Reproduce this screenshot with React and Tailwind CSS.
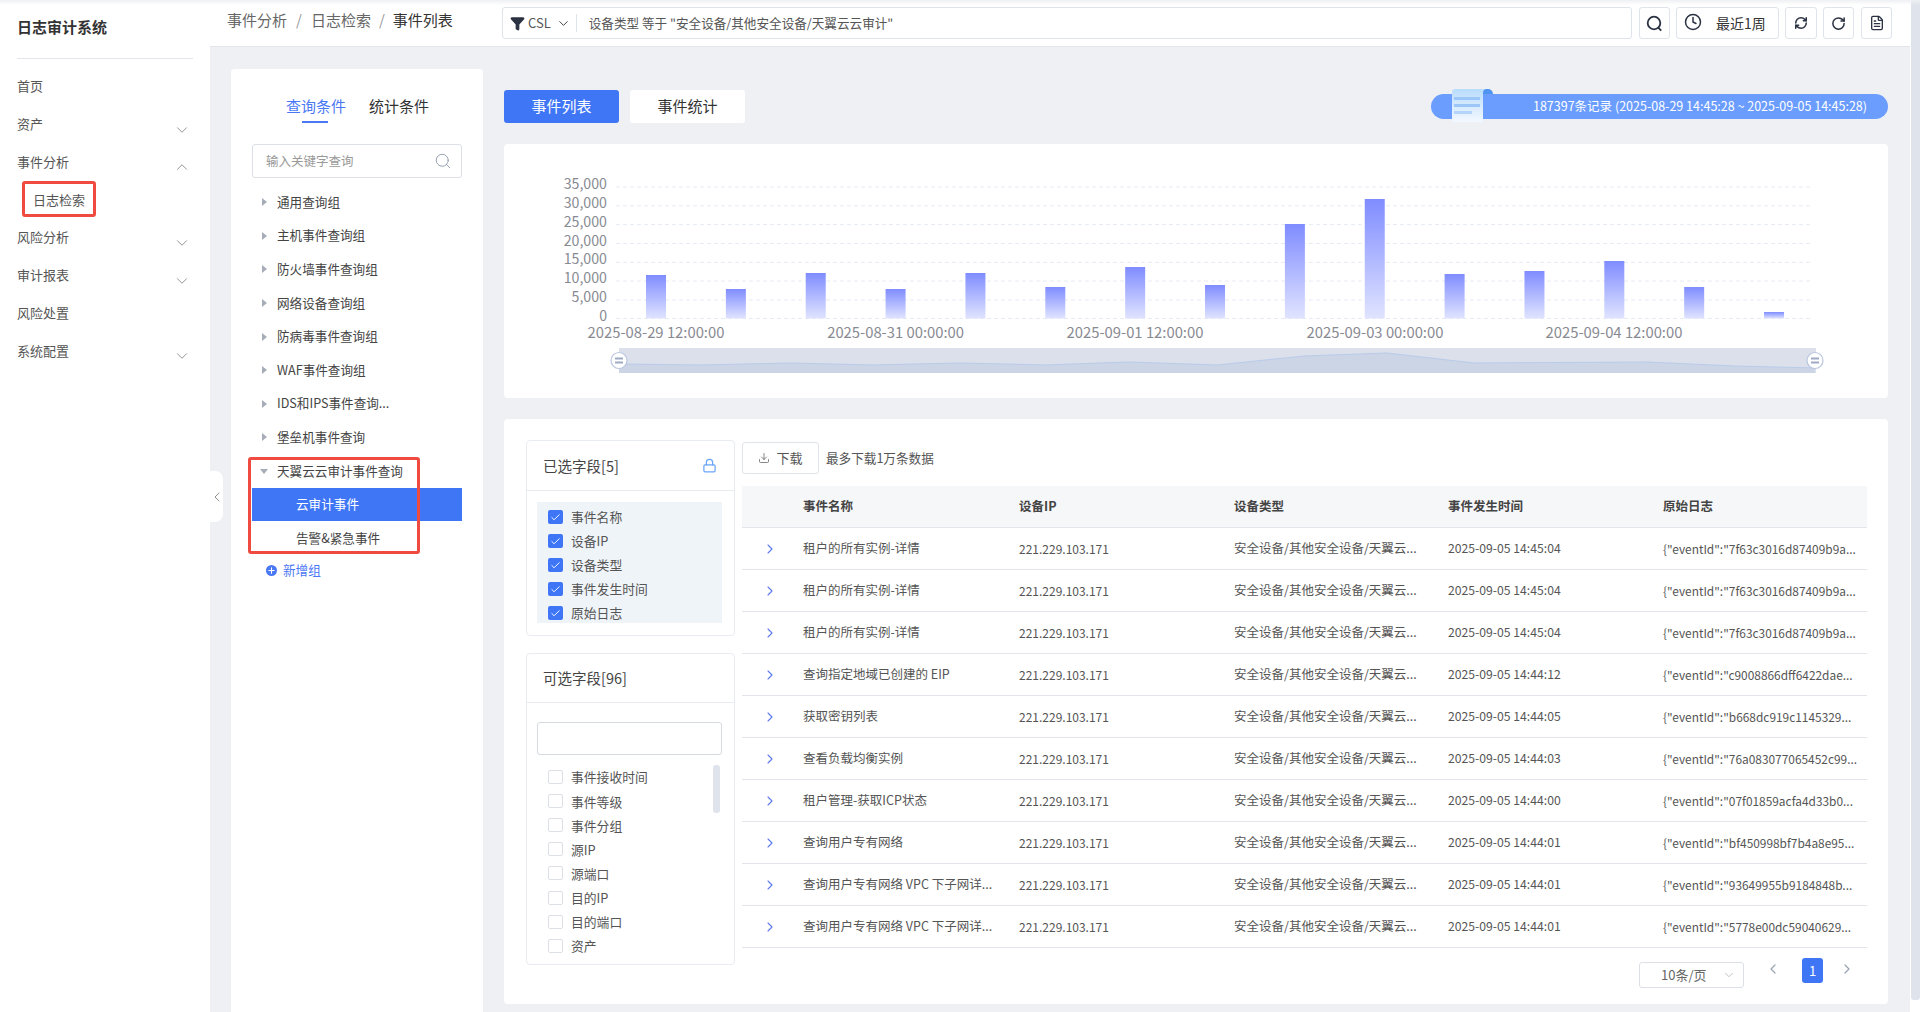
import { ChevronDown, ChevronUp, ChevronLeft, ChevronRight, Check, Clock, RotateCw, FileText, RefreshCw, Lock, Search, Download, Filter, Plus } from "lucide-react";

const menu = [
  { label: "首页" },
  { label: "资产", arrow: "down" },
  { label: "事件分析", arrow: "up" },
  { label: "日志检索", sub: true },
  { label: "风险分析", arrow: "down" },
  { label: "审计报表", arrow: "down" },
  { label: "风险处置" },
  { label: "系统配置", arrow: "down" },
];

const groups = ["通用查询组", "主机事件查询组", "防火墙事件查询组", "网络设备查询组", "防病毒事件查询组", "WAF事件查询组", "IDS和IPS事件查询...", "堡垒机事件查询"];

const selectedFields = ["事件名称", "设备IP", "设备类型", "事件发生时间", "原始日志"];
const optionalFields = ["事件接收时间", "事件等级", "事件分组", "源IP", "源端口", "目的IP", "目的端口", "资产"];

const rows = [
  ["租户的所有实例-详情", "2025-09-05 14:45:04", '{"eventId":"7f63c3016d87409b9a...'],
  ["租户的所有实例-详情", "2025-09-05 14:45:04", '{"eventId":"7f63c3016d87409b9a...'],
  ["租户的所有实例-详情", "2025-09-05 14:45:04", '{"eventId":"7f63c3016d87409b9a...'],
  ["查询指定地域已创建的 EIP", "2025-09-05 14:44:12", '{"eventId":"c9008866dff6422dae...'],
  ["获取密钥列表", "2025-09-05 14:44:05", '{"eventId":"b668dc919c1145329...'],
  ["查看负载均衡实例", "2025-09-05 14:44:03", '{"eventId":"76a083077065452c99...'],
  ["租户管理-获取ICP状态", "2025-09-05 14:44:00", '{"eventId":"07f01859acfa4d33b0...'],
  ["查询用户专有网络", "2025-09-05 14:44:01", '{"eventId":"bf450998bf7b4a8e95...'],
  ["查询用户专有网络 VPC 下子网详...", "2025-09-05 14:44:01", '{"eventId":"93649955b9184848b...'],
  ["查询用户专有网络 VPC 下子网详...", "2025-09-05 14:44:01", '{"eventId":"5778e00dc59040629...'],
];

const barTops = [275, 289, 273, 289, 273, 287, 267, 285, 224, 199, 274, 271, 261, 287, 312];
const gridY = [187, 205.8, 224.6, 243.5, 262.3, 281, 300, 318.5];
const yLabels = ["35,000", "30,000", "25,000", "20,000", "15,000", "10,000", "5,000", "0"];
const xLabels = [
  [656, "2025-08-29 12:00:00"],
  [895.6, "2025-08-31 00:00:00"],
  [1135, "2025-09-01 12:00:00"],
  [1375, "2025-09-03 00:00:00"],
  [1614, "2025-09-04 12:00:00"],
];
const sliderLine = "M619 364 L700 365 L790 363 L873 365 L960 363 L1046 365 L1129 362 L1217 365 L1304 356 L1387 353 L1474 363 L1646 362 L1735 366 L1815 368";

function Chart() {
  return (
    <svg viewBox="504 144 1384 254" className="block w-full h-full">
      <defs>
        <linearGradient id="bar" x1="0" y1="0" x2="0" y2="1">
          <stop offset="0%" stopColor="#7f8cff" />
          <stop offset="100%" stopColor="#e0e4ff" />
        </linearGradient>
      </defs>
      {gridY.map((y, i) => (
        <g key={y}>
          <line x1="616" x2="1813" y1={y} y2={y} stroke="#e6eaf3" strokeWidth="1" strokeDasharray="4 3" />
          <text x="607" y={y + 2} textAnchor="end" fontSize="14.2" fill="#888a92">{yLabels[i]}</text>
        </g>
      ))}
      {barTops.map((top, i) => (
        <rect key={i} x={646 + i * 79.86} y={top} width="20" height={318.5 - top} fill="url(#bar)" />
      ))}
      {xLabels.map(([x, label]) => (
        <text key={label} x={x} y="337.5" textAnchor="middle" fontSize="14.8" fill="#888a92">{label}</text>
      ))}
      <rect x="619" y="348" width="1197" height="25" fill="#dbe0ea" />
      <path d={sliderLine + " L1815 373 L619 373 Z"} fill="#ccd5e6" />
      <path d={sliderLine} fill="none" stroke="#b9cbea" strokeWidth="1" />
      {[619, 1815].map((x) => (
        <g key={x}>
          <circle cx={x} cy="360.5" r="8" fill="#fff" stroke="#b9c6df" strokeWidth="1.2" />
          <rect x={x - 4} y="357.5" width="8" height="2" fill="#9daac6" />
          <rect x={x - 4} y="361.5" width="8" height="2" fill="#9daac6" />
        </g>
      ))}
    </svg>
  );
}

function Triangle({ open }) {
  return (
    <svg width="10" height="10" viewBox="0 0 10 10" className="flex-none">
      {open ? <polygon points="1,3 9,3 5,8" fill="#a7adb8" /> : <polygon points="3,1 8,5 3,9" fill="#a7adb8" />}
    </svg>
  );
}

function Sidebar() {
  return (
    <aside className="w-[210px] flex-none bg-white">
      <div className="h-[59px] mx-[17px] border-b border-[#e3e5ea] pt-[16px] text-[15px] leading-[22px] font-bold text-[#333]">
        日志审计系统
      </div>
      <div className="pt-[8px] text-[13px] text-[#555]">
        {menu.map((item) =>
          item.sub ? (
            <div key={item.label} className="h-[37.8px] flex items-center pl-[22px]">
              <div className="w-[74px] h-[36px] border-[3px] border-[#f04b40] rounded-[3px] flex items-center justify-center">
                {item.label}
              </div>
            </div>
          ) : (
            <div key={item.label} className="h-[37.8px] flex items-center pl-[17px] pr-[19px] justify-between">
              <span>{item.label}</span>
              {item.arrow === "down" && <ChevronDown size={18} strokeWidth={1.2} className="text-[#888] mt-[12px]" />}
              {item.arrow === "up" && <ChevronUp size={18} strokeWidth={1.2} className="text-[#888] mt-[11px]" />}
            </div>
          )
        )}
      </div>
    </aside>
  );
}

function IconButton({ children, className }) {
  return (
    <div className={"h-[32px] flex-none flex items-center justify-center border border-[#dfe3eb] rounded-[3px] bg-white text-[#2b3242] " + className}>
      {children}
    </div>
  );
}

function TopBar() {
  return (
    <header className="h-[47px] flex-none flex items-center bg-white border-b border-[#e3e5ea] pl-[17px] pr-[18px]">
      <div className="w-[275px] flex-none -mt-[5px] text-[15px] text-[#666] flex items-center">
        <span>事件分析</span>
        <span className="mx-[9px] text-[#999]">/</span>
        <span>日志检索</span>
        <span className="mx-[8px] text-[#999]">/</span>
        <span className="text-[#333]">事件列表</span>
      </div>
      <div className="flex-1 h-[32px] flex items-center border border-[#dfe3eb] rounded-[3px] pl-[7px]">
        <Filter size={15} fill="#2b3242" className="text-[#2b3242] flex-none" />
        <span className="ml-[3px] text-[13px] text-[#555]">CSL</span>
        <ChevronDown size={15} strokeWidth={1.6} className="ml-[5px] text-[#444]" />
        <div className="w-px h-[18px] bg-[#dfe3eb] ml-[5px]"></div>
        <span className="ml-[12px] text-[12.6px] text-[#555] whitespace-pre">设备类型 等于 "安全设备/其他安全设备/天翼云云审计"</span>
      </div>
      <IconButton className="w-[31px] ml-[7px]">
        <svg width="17" height="17" viewBox="0 0 17 17" fill="none" stroke="currentColor" strokeWidth="1.8">
          <circle cx="8" cy="8" r="6.3" />
          <path d="M12.3 12.6 L15.2 15.6" />
        </svg>
      </IconButton>
      <IconButton className="w-[103px] ml-[6px] !justify-start pl-[7px]">
        <Clock size={18} strokeWidth={2} className="-mt-[2px]" />
        <span className="ml-[14px] text-[14px] text-[#333]">最近1周</span>
      </IconButton>
      <IconButton className="w-[32px] ml-[6px]"><RefreshCw size={14} strokeWidth={2.6} /></IconButton>
      <IconButton className="w-[31px] ml-[6px]"><RotateCw size={15} strokeWidth={2.4} /></IconButton>
      <IconButton className="w-[31px] ml-[7px]"><FileText size={16} strokeWidth={2} /></IconButton>
    </header>
  );
}

function QueryPanel() {
  return (
    <div className="w-[252px] flex-none bg-white rounded-t-[4px] self-stretch">
      <div className="h-[54px] pt-[26px] pl-[55px] flex text-[15px] leading-[22px]">
        <div className="relative text-[#4a78f5] w-[60px] whitespace-nowrap">
          查询条件
          <div className="absolute left-[16px] top-[26px] w-[26px] h-[2px] bg-[#4a78f5]"></div>
        </div>
        <div className="ml-[23px] text-[#333] whitespace-nowrap">统计条件</div>
      </div>
      <div className="mx-[21px] mt-[21px] h-[34px] border border-[#dcdfe6] rounded-[3px] flex items-center justify-between pl-[13px] pr-[9px]">
        <span className="text-[12.5px] text-[#999]">输入关键字查询</span>
        <Search size={18} strokeWidth={1.2} className="text-[#8c96a8]" />
      </div>
      <div className="mt-[7.5px] ml-[21px] text-[12.6px] text-[#444]">
        {groups.map((g) => (
          <div key={g} className="h-[33.6px] flex items-center pl-[7px] gap-[8px]">
            <Triangle />
            <span>{g}</span>
          </div>
        ))}
        <div className="relative w-[210px]">
          <div className="absolute -left-[4px] top-[3px] w-[172px] h-[97px] border-[3px] border-[#f04b40] rounded-[3px]"></div>
          <div className="h-[33.6px] flex items-center pl-[7px] gap-[8px]">
            <Triangle open />
            <span>天翼云云审计事件查询</span>
          </div>
          <div className="h-[33.6px] flex items-center pl-[44px] bg-[#3f76f6] text-white">云审计事件</div>
          <div className="h-[33.6px] flex items-center pl-[44px]">告警&amp;紧急事件</div>
        </div>
        <div className="h-[30px] flex items-center pl-[14px] gap-[6px] text-[#4a78f5]">
          <span className="w-[11px] h-[11px] rounded-full bg-[#4a78f5] flex items-center justify-center">
            <Plus size={9} strokeWidth={3} className="text-white" />
          </span>
          新增组
        </div>
      </div>
    </div>
  );
}

function Box({ checked }) {
  return checked ? (
    <span className="w-[15px] h-[14px] flex-none rounded-[2px] bg-[#3f76f6] flex items-center justify-center">
      <Check size={11} strokeWidth={2} className="text-white" />
    </span>
  ) : (
    <span className="w-[15px] h-[14px] flex-none rounded-[2px] border border-[#dcdfe6] bg-white"></span>
  );
}

function FieldPanel() {
  return (
    <div className="w-[209px] flex-none text-[12.8px] text-[#555]">
      <div className="h-[196px] border border-[#e8ebf0] rounded-[4px]">
        <div className="h-[50px] border-b border-[#e8ebf0] pl-[16px] pr-[17px] flex items-center justify-between text-[14.5px] text-[#444]">
          已选字段[5]
          <Lock size={15} strokeWidth={2} className="text-[#69a5f7]" />
        </div>
        <div className="ml-[10px] mr-[12px] mt-[11px] h-[121px] bg-[#eff4f9] pl-[11px] pt-[3px] overflow-hidden">
          {selectedFields.map((f) => (
            <div key={f} className="h-[24px] flex items-center gap-[8px]">
              <Box checked />
              {f}
            </div>
          ))}
        </div>
      </div>
      <div className="mt-[17px] h-[312px] border border-[#e8ebf0] rounded-[4px]">
        <div className="h-[49px] border-b border-[#e8ebf0] pl-[16px] flex items-center text-[14.5px] text-[#444]">可选字段[96]</div>
        <div className="ml-[10px] mr-[12px] mt-[19px] h-[33px] border border-[#d5d9e0] rounded-[3px]"></div>
        <div className="relative ml-[10px] mr-[12px] mt-[10px] h-[196px] pl-[11px] overflow-hidden">
          <div className="absolute right-[2px] top-0 w-[7px] h-[48px] rounded-[3px] bg-[#dfe3ec]"></div>
          {optionalFields.map((f) => (
            <div key={f} className="h-[24.1px] flex items-center gap-[8px]">
              <Box />
              {f}
            </div>
          ))}
        </div>
      </div>
    </div>
  );
}

function EventTable() {
  return (
    <div className="flex-1 min-w-0 pt-[2px] text-[12.5px] text-[#555]">
      <div className="flex items-center h-[32px]">
        <div className="w-[77px] h-[32px] flex items-center justify-center gap-[6px] border border-[#dfe3eb] rounded-[3px] text-[#555] text-[13px]">
          <Download size={12} strokeWidth={1.4} />
          下载
        </div>
        <span className="ml-[7px] text-[12.6px]">最多下载1万条数据</span>
      </div>
      <div className="mt-[12px] h-[42px] grid grid-cols-[61px_216px_215px_214px_215px_1fr] items-center bg-[#f6f7f9] border-b border-[#e3e5ea] font-bold text-[#444]">
        <span></span>
        <span>事件名称</span>
        <span>设备IP</span>
        <span>设备类型</span>
        <span>事件发生时间</span>
        <span>原始日志</span>
      </div>
      {rows.map((r, i) => (
        <div key={i} className="h-[42px] grid grid-cols-[61px_216px_215px_214px_215px_1fr] items-center border-b border-[#e3e5ea]">
          <ChevronRight size={16} strokeWidth={1.6} className="text-[#5a7bea] ml-[20px]" />
          <span className="whitespace-nowrap">{r[0]}</span>
          <span className="text-[12px]">221.229.103.171</span>
          <span className="whitespace-nowrap">安全设备/其他安全设备/天翼云...</span>
          <span className="text-[12.2px]">{r[1]}</span>
          <span className="whitespace-nowrap text-[11.9px]">{r[2]}</span>
        </div>
      ))}
      <div className="flex items-start mt-[10px] pl-[897px]">
        <div className="w-[105px] h-[26px] mt-[4px] flex items-center justify-between border border-[#dcdfe6] rounded-[3px] pl-[21px] pr-[7px] text-[13px] text-[#666]">
          10条/页
          <ChevronDown size={14} strokeWidth={1.2} className="text-[#aaa]" />
        </div>
        <ChevronLeft size={16} strokeWidth={1.8} className="ml-[21px] mt-[3px] text-[#9aa3b2]" />
        <div className="ml-[21px] w-[21px] h-[25px] rounded-[3px] bg-[#3f76f6] text-white text-[13px] flex items-center justify-center">1</div>
        <ChevronRight size={16} strokeWidth={1.8} className="ml-[16px] mt-[3px] text-[#9aa3b2]" />
      </div>
    </div>
  );
}

export default function App() {
  return (
    <div className="relative flex w-full h-[1012px] overflow-hidden bg-white font-['Noto_Sans_CJK_SC',sans-serif]">
      <div className="absolute left-0 right-0 top-0 h-[5px] bg-gradient-to-b from-[#eff0f3] to-transparent"></div>
      <Sidebar />
      <div className="w-[1700px] flex-none flex flex-col bg-[#eef0f4]">
        <TopBar />
        <div className="relative flex-1 min-h-0 flex pt-[22px] pl-[21px] gap-[21px]">
          <div className="absolute left-0 top-[424px] w-[13px] h-[51px] bg-white rounded-r-[8px] flex items-center justify-center">
            <ChevronLeft size={16} strokeWidth={1.4} className="text-[#888] flex-none" />
          </div>
          <QueryPanel />
          <div className="w-[1384px] flex-none pt-[21px]">
            <div className="flex items-center h-[33px]">
              <div className="w-[115px] h-[33px] rounded-[3px] bg-[#3f76f6] text-white text-[15px] flex items-center justify-center">事件列表</div>
              <div className="w-[115px] h-[33px] ml-[11px] rounded-[3px] bg-white text-[#333] text-[15px] flex items-center justify-center">事件统计</div>
              <div className="relative ml-auto w-[457px] h-[25px] rounded-full bg-[#6b9dff] text-white text-[12.5px] flex items-center justify-end pr-[21px]">
                <svg width="41" height="33" viewBox="0 0 41 33" className="absolute left-[21px] -top-[5px]">
                  <defs>
                    <linearGradient id="paper" x1="0" y1="0" x2="0" y2="1">
                      <stop offset="0%" stopColor="#b9dcfd" />
                      <stop offset="100%" stopColor="#f3f8ff" />
                    </linearGradient>
                  </defs>
                  <path d="M26 0 H36 a5 5 0 0 1 5 5 H26 Z" fill="#4f94f0" />
                  <path d="M3 0 H34 a4 4 0 0 0 -3 4 V33 H0 V3 a3 3 0 0 1 3 -3 Z" fill="url(#paper)" />
                  <rect x="2" y="8" width="26" height="3" fill="#9cc6f8" />
                  <rect x="2" y="15" width="26" height="3" fill="#9cc6f8" />
                  <rect x="2" y="22" width="18" height="3" fill="#b4d4fa" />
                </svg>
                187397条记录 (2025-08-29 14:45:28 ~ 2025-09-05 14:45:28)
              </div>
            </div>
            <div className="mt-[21px] h-[254px] bg-white rounded-[4px]">
              <Chart />
            </div>
            <div className="mt-[21px] h-[585px] bg-white rounded-[4px] flex pl-[22px] pr-[21px] pt-[21px] gap-[7px]">
              <FieldPanel />
              <EventTable />
            </div>
          </div>
        </div>
      </div>
      <div className="flex-1 pl-px">
        <div className="h-[1000px] bg-[#dfe3eb] rounded-b-[3px]"></div>
      </div>
    </div>
  );
}
